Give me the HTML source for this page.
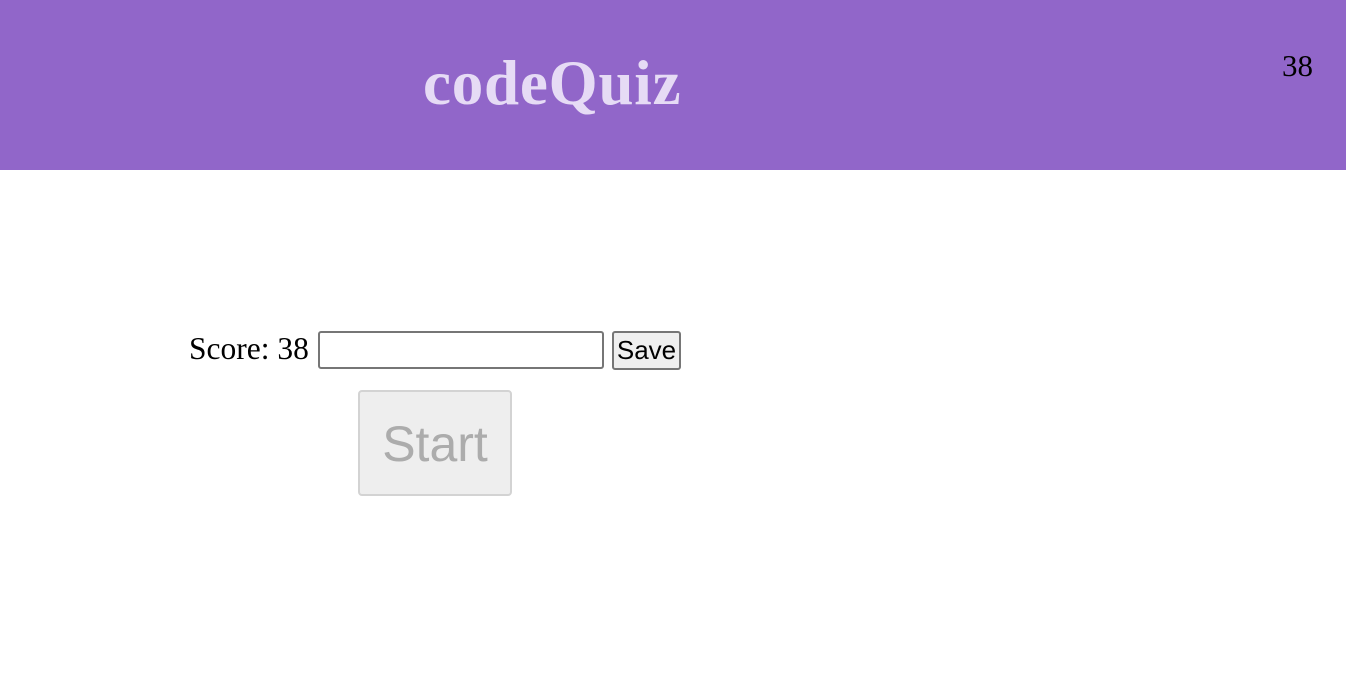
<!DOCTYPE html>
<html><head><style>
body{margin:0;width:1346px;height:698px;background:#fff;position:relative;overflow:hidden;font-family:"Liberation Serif",serif}
.hdr{position:absolute;left:0;top:0;width:1346px;height:170px;background:#9166c9}
.title{position:absolute;left:423px;top:47px;font-size:63px;font-weight:bold;color:#e6dbf5;letter-spacing:0.8px;line-height:72px}
.time{position:absolute;left:1282px;top:49px;font-size:31px;line-height:34px}
.score{position:absolute;left:189px;top:331px;font-size:31.5px;line-height:36px}
.inp{position:absolute;left:318px;top:331px;border:2px solid #767676;border-radius:3px;width:282px;height:34px}
.save{position:absolute;left:612px;top:331px;width:65px;height:35px;border:2px solid #767676;border-radius:3px;background:#efefef;font-family:"Liberation Sans",sans-serif;font-size:26px;line-height:35px;text-align:center}
.start{position:absolute;left:358px;top:390px;width:150px;height:102px;border:2px solid #d3d3d3;border-radius:4px;background:#eeeeee;color:#acacac;font-family:"Liberation Sans",sans-serif;font-size:50px;line-height:104px;text-align:center}
</style></head><body>
<div class="hdr"><div class="title">codeQuiz</div><div class="time">38</div></div>
<div class="score">Score: 38</div>
<div class="inp"></div>
<div class="save">Save</div>
<div class="start">Start</div>
</body></html>
